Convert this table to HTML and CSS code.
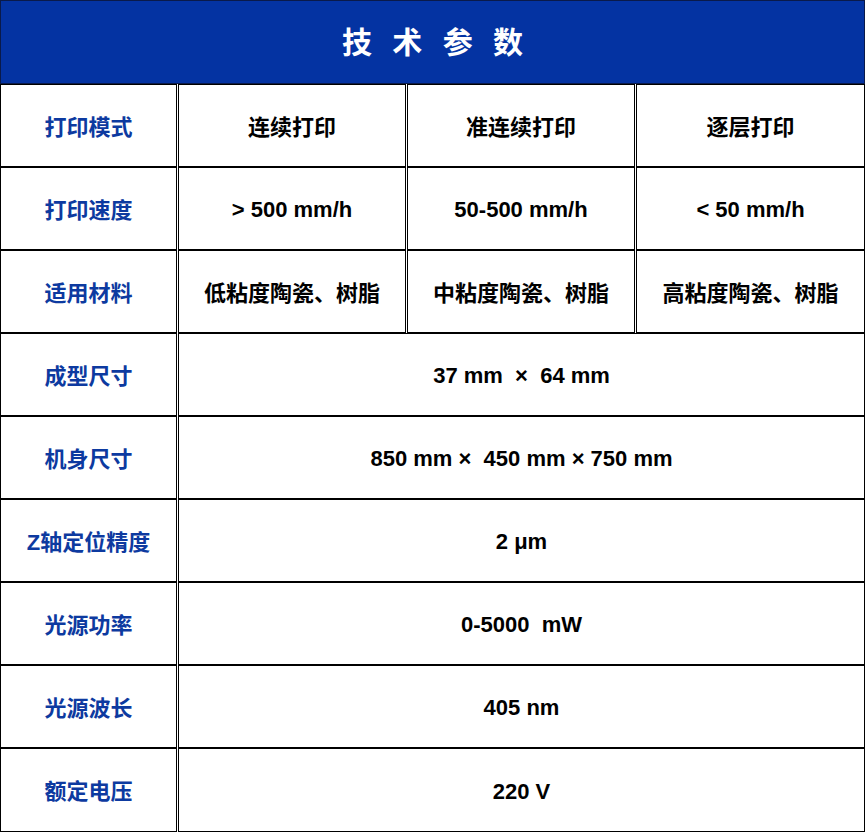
FILE: index.html
```html
<!DOCTYPE html>
<html lang="zh-CN">
<head>
<meta charset="utf-8">
<title>技术参数</title>
<link rel="stylesheet" href="styles.css">
</head>
<body>
<div class="spec">
  <div class="cell head">技 术 参 数</div>

  <div class="cell label">打印模式</div>
  <div class="cell val">连续打印</div>
  <div class="cell val">准连续打印</div>
  <div class="cell val">逐层打印</div>

  <div class="cell label">打印速度</div>
  <div class="cell val num">&gt; 500 mm/h</div>
  <div class="cell val num">50-500 mm/h</div>
  <div class="cell val num">&lt; 50 mm/h</div>

  <div class="cell label">适用材料</div>
  <div class="cell val">低粘度陶瓷、树脂</div>
  <div class="cell val">中粘度陶瓷、树脂</div>
  <div class="cell val">高粘度陶瓷、树脂</div>

  <div class="cell label">成型尺寸</div>
  <div class="cell val num wide">37 mm&nbsp; ×&nbsp; 64 mm</div>

  <div class="cell label">机身尺寸</div>
  <div class="cell val num wide">850 mm ×&nbsp; 450 mm × 750 mm</div>

  <div class="cell label">Z轴定位精度</div>
  <div class="cell val num wide">2 μm</div>

  <div class="cell label">光源功率</div>
  <div class="cell val num wide">0-5000&nbsp; mW</div>

  <div class="cell label">光源波长</div>
  <div class="cell val num wide">405 nm</div>

  <div class="cell label">额定电压</div>
  <div class="cell val num wide">220 V</div>
</div>
</body>
</html>
```

FILE: styles.css
```css
html, body {
  margin: 0;
  padding: 0;
  background: #ffffff;
}

.spec {
  width: 865px;
  display: grid;
  grid-template-columns: 177px 228px 228px 229px;
  grid-template-rows: 84px repeat(8, 83px) 84px;
  column-gap: 1px;
  background: #ffffff;
  font-family: "Liberation Sans", "Noto Sans CJK SC", sans-serif;
  font-weight: 700;
}

.cell {
  box-sizing: border-box;
  border: 1px solid #000000;
  display: flex;
  align-items: center;
  justify-content: center;
  font-size: 22px;
  white-space: nowrap;
  padding-bottom: 2px;
}

.head {
  grid-column: 1 / 5;
  background: #0433a2;
  border-color: #0a1a4a;
  color: #ffffff;
  font-size: 30px;
  letter-spacing: 6px;
  padding-left: 6px;
  padding-bottom: 4px;
}

.label {
  color: #0d3aa0;
}

.val {
  color: #000000;
}

.num {
  padding-bottom: 0;
  padding-top: 3px;
}

.wide {
  grid-column: 2 / 5;
}
```
